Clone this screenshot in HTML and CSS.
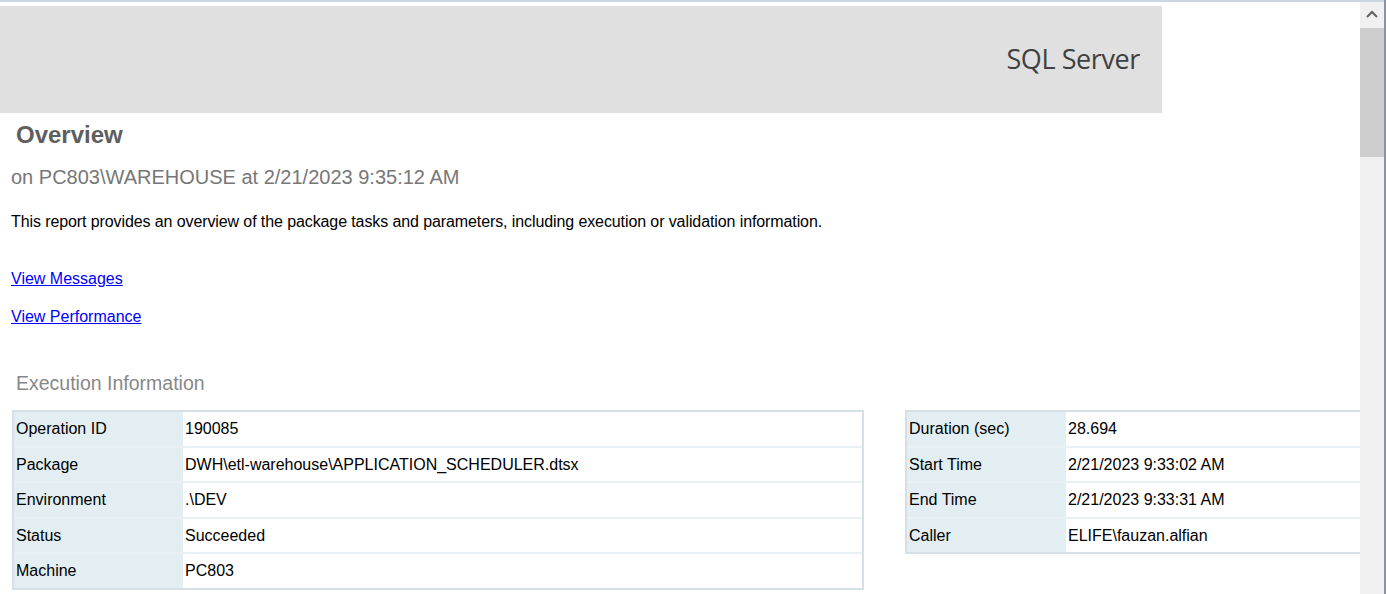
FILE: index.html
```html
<!DOCTYPE html>
<html lang="en">
<head>
<meta charset="utf-8">
<title>Overview - SQL Server</title>
<link rel="stylesheet" href="styles.css">
</head>
<body>
<div class="window">
  <div class="topline"></div>
  <div class="frame">
    <main class="page">
      <header class="banner"><span class="brand">SQL Server</span></header>
      <div class="content">
        <h1 class="title">Overview</h1>
        <p class="subtitle">on PC803\WAREHOUSE at 2/21/2023 9:35:12 AM</p>
        <p class="desc">This report provides an overview of the package tasks and parameters, including execution or validation information.</p>
        <nav class="links">
          <a href="#" class="link">View Messages</a>
          <a href="#" class="link">View Performance</a>
        </nav>
        <h2 class="section">Execution Information</h2>
        <div class="tables">
          <table class="info info-main">
            <tr><td class="label">Operation ID</td><td class="value">190085</td></tr>
            <tr><td class="label">Package</td><td class="value">DWH\etl-warehouse\APPLICATION_SCHEDULER.dtsx</td></tr>
            <tr><td class="label">Environment</td><td class="value">.\DEV</td></tr>
            <tr><td class="label">Status</td><td class="value">Succeeded</td></tr>
            <tr><td class="label">Machine</td><td class="value">PC803</td></tr>
          </table>
          <table class="info info-side">
            <tr><td class="label">Duration (sec)</td><td class="value">28.694</td></tr>
            <tr><td class="label">Start Time</td><td class="value">2/21/2023 9:33:02 AM</td></tr>
            <tr><td class="label">End Time</td><td class="value">2/21/2023 9:33:31 AM</td></tr>
            <tr><td class="label">Caller</td><td class="value">ELIFE\fauzan.alfian</td></tr>
          </table>
        </div>
      </div>
    </main>
    <div class="scrollbar">
      <div class="arrow">
        <svg width="12" height="8" viewBox="0 0 12 8"><path d="M1 7 L6 2 L11 7" fill="none" stroke="#606060" stroke-width="2"/></svg>
      </div>
      <div class="thumb"></div>
    </div>
  </div>
</div>
</body>
</html>
```

FILE: styles.css
```css
* { box-sizing: border-box; }
html, body { margin: 0; padding: 0; background: #ffffff; }
body {
  font-family: "Liberation Sans", Arial, sans-serif;
  font-size: 16px;
  color: #000;
}
.window {
  width: 1386px;
  height: 594px;
  display: flex;
  flex-direction: column;
  border-right: 2px solid #8b91a2;
  overflow: hidden;
}
.topline {
  height: 2px;
  background: #cbd6e4;
  flex-shrink: 0;
}
.frame {
  flex: 1;
  display: flex;
  min-height: 0;
}
.page {
  width: 1360px;
  flex-shrink: 0;
  overflow: hidden;
}
.banner {
  margin-top: 4px;
  width: 1162px;
  height: 107px;
  background: #e0e0e0;
  display: flex;
  align-items: center;
  justify-content: flex-end;
  padding-right: 22px;
  padding-bottom: 2px;
}
.brand {
  font-family: "Open Sans", "Noto Sans", sans-serif;
  font-size: 27px;
  letter-spacing: -0.4px;
  color: #404040;
}
.content {
  padding-left: 11px;
}
.title {
  margin: 10px 0 0;
  padding-left: 5px;
  font-size: 24px;
  line-height: 24px;
  font-weight: bold;
  color: #5e5e5e;
}
.subtitle {
  margin: 20px 0 0;
  font-size: 20px;
  line-height: 20px;
  color: #777777;
}
.desc {
  margin: 27px 0 0;
  font-size: 16px;
  line-height: 16px;
  letter-spacing: -0.1px;
}
.links {
  margin-top: 41px;
  display: flex;
  flex-direction: column;
  align-items: flex-start;
  gap: 22px;
}
.link {
  font-size: 16px;
  line-height: 16px;
  color: #0000ff;
  text-decoration: underline;
}
.section {
  margin: 48.5px 0 0;
  padding-left: 5px;
  font-size: 19.5px;
  line-height: 19.5px;
  font-weight: normal;
  color: #888888;
}
.tables {
  margin-top: 17px;
  margin-left: 1px;
  display: flex;
  align-items: flex-start;
  gap: 41px;
}
.info {
  border-collapse: separate;
  border-spacing: 0;
  border: 2px solid #d4e0e4;
  flex-shrink: 0;
  font-size: 16px;
}
.info td {
  padding: 1px 0 0 2px;
  line-height: 32.5px;
  border-bottom: 2px solid #e8f0f3;
  white-space: nowrap;
}
.info tr:last-child td { border-bottom: none; }
.info .label {
  background: #e2eef2;
}
.info .value {
  background: #ffffff;
  padding-left: 2px;
}
.info-main { width: 852px; }
.info-main .label { width: 169px; }
.info-side { width: 700px; }
.info-side .label { width: 159px; }
.scrollbar {
  width: 24px;
  flex-shrink: 0;
  background: #f0f0f0;
  display: flex;
  flex-direction: column;
}
.arrow {
  height: 26px;
  display: flex;
  align-items: center;
  justify-content: center;
  padding-bottom: 2px;
}
.thumb {
  height: 129px;
  background: #cdcdcd;
}
```
